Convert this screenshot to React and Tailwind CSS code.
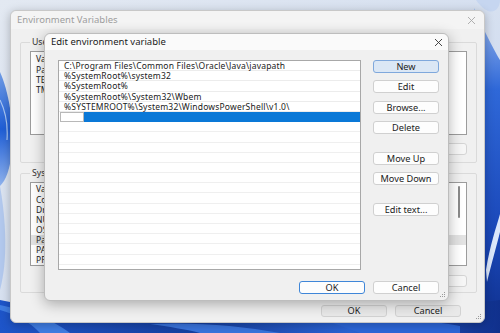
import React from 'react';

const font = { fontFamily: '"Noto Sans", "Open Sans", sans-serif' };

const Wallpaper = () => (
  <svg className="absolute inset-0" width="500" height="333" viewBox="0 0 500 333">
    <defs>
      <linearGradient id="sky" x1="0" y1="0" x2="1" y2="1">
        <stop offset="0" stopColor="#e3e9f2" />
        <stop offset="1" stopColor="#c9d7ee" />
      </linearGradient>
      <linearGradient id="ribbonL" x1="0" y1="0" x2="0" y2="1">
        <stop offset="0" stopColor="#6f9ce6" />
        <stop offset="0.5" stopColor="#1f5ed6" />
        <stop offset="1" stopColor="#8fb3ee" />
      </linearGradient>
      <linearGradient id="ribbonR" x1="0" y1="0" x2="0" y2="1">
        <stop offset="0" stopColor="#9dbbee" />
        <stop offset="0.25" stopColor="#2f68d8" />
        <stop offset="0.7" stopColor="#1a47b8" />
        <stop offset="1" stopColor="#0f2f8a" />
      </linearGradient>
      <linearGradient id="ribbonB" x1="0" y1="0" x2="1" y2="0">
        <stop offset="0" stopColor="#1e55c9" />
        <stop offset="0.4" stopColor="#163f9f" />
        <stop offset="0.7" stopColor="#2a63d4" />
        <stop offset="1" stopColor="#10308c" />
      </linearGradient>
    </defs>
    <rect width="500" height="333" fill="url(#sky)" />
    <path d="M0 72 C8 90 14 120 12 150 C10 170 6 180 0 186 Z" fill="url(#ribbonL)" />
    <path d="M0 100 C5 110 8 125 7 140" stroke="#a9c6f2" strokeWidth="1.2" fill="none" />
    <path d="M0 186 C6 220 8 260 0 290 Z" fill="#b3c9ee" />
    <path d="M476 0 C490 20 500 10 500 0 Z" fill="#c6d6f0" />
    <path d="M474 8 C488 40 500 60 500 60 L500 333 L470 333 Z" fill="url(#ribbonR)" />
    <path d="M486 270 C490 245 496 228 500 214 L500 232 C496 248 492 262 487 282 Z" fill="#dbe7fb" />
    <path d="M0 300 C60 312 140 318 250 316 C340 314 420 310 500 300 L500 333 L0 333 Z" fill="url(#ribbonB)" />
    <path d="M0 305 C30 312 50 318 70 333 L40 333 C30 322 15 314 0 310 Z" fill="#3f7de3" />
    <path d="M150 324 C200 322 240 326 280 333 L200 333 C185 329 170 327 150 324 Z" fill="#3a74dd" />
    <path d="M330 322 C380 320 420 318 460 326 L460 333 L360 333 Z" fill="#2c66d8" />
  </svg>
);

const Btn = ({ children, className = '' }) => (
  <div
    className={`flex items-center justify-center rounded-[3px] border text-[9.2px] leading-[10px] text-[#1b1b1b] ${className}`}
  >
    {children}
  </div>
);

const CloseX = ({ color }) => (
  <svg width="9" height="9" viewBox="0 0 9 9">
    <path d="M1 1 L8 8 M8 1 L1 8" stroke={color} strokeWidth="0.9" />
  </svg>
);

const Grip = () => (
  <svg width="7" height="7" viewBox="0 0 7 7" className="absolute bottom-[2px] right-[2px]">
    <g fill="#9a9a9a">
      <rect x="5" y="1" width="1" height="1" />
      <rect x="3" y="3" width="1" height="1" />
      <rect x="5" y="3" width="1" height="1" />
      <rect x="1" y="5" width="1" height="1" />
      <rect x="3" y="5" width="1" height="1" />
      <rect x="5" y="5" width="1" height="1" />
    </g>
  </svg>
);

// only the left edge of these lists peeks out from under the front dialog
const OuterList = ({ rows, height, header, highlight, scroll }) => (
  <div className={`relative mt-[3px] w-[437px] ${height} overflow-hidden border border-[#9c9c9c] bg-white`}>
    <div className={`flex ${header} items-center pl-[5px] text-[8.5px] leading-[10px] text-[#222]`}>Variable</div>
    {rows.map((r) => (
      <div
        key={r}
        className={`flex h-[10px] items-center pl-[5px] text-[8.5px] leading-[10px] text-[#222] ${r === highlight ? 'bg-[#e3e3e3]' : ''}`}
      >
        {r}
      </div>
    ))}
    {scroll && <div className="absolute right-[6px] top-[3px] h-[32px] w-[2px] rounded bg-[#8a8a8a]" />}
  </div>
);

const OuterButtons = ({ mt }) => (
  <div className={`${mt} flex justify-end`}>
    <Btn className="h-[12px] w-[66px] border-[#d4d4d4] bg-[#f6f6f6]">Delete</Btn>
  </div>
);

const paths = [
  'C:\\Program Files\\Common Files\\Oracle\\Java\\javapath',
  '%SystemRoot%\\system32',
  '%SystemRoot%',
  '%SystemRoot%\\System32\\Wbem',
  '%SYSTEMROOT%\\System32\\WindowsPowerShell\\v1.0\\',
];

export default function App() {
  const empty = Array.from({ length: 16 }, (_, i) => i);
  return (
    <div className="relative h-[333px] w-[500px] overflow-hidden" style={font}>
      <Wallpaper />

      {/* Environment Variables (behind) */}
      <div className="absolute left-[10px] top-[10px] flex h-[313px] w-[475px] flex-col rounded-[6px] border border-[#c8c8c8] bg-[#f0f0f0] shadow-[0_2px_10px_rgba(0,0,0,0.25)]">
        <div className="flex h-[18px] items-center justify-between rounded-t-[6px] bg-[#f4f4f4] pl-[6px] pr-[8px]">
          <span className="text-[9.5px] leading-[12px] text-[#9d9d9d]">Environment Variables</span>
          <CloseX color="#a8a8a8" />
        </div>
        <fieldset className="mx-[9px] mt-[7px] h-[127px] rounded-[2px] border border-[#dadada] px-[9px]">
          <legend className="px-[2px] text-[8.7px] leading-[12px] text-[#333]">User variables</legend>
          <OuterList rows={['Path', 'TEMP', 'TMP']} height="h-[84px]" header="h-[13px]" />
          <OuterButtons mt="mt-[8px]" />
        </fieldset>
        <fieldset className="mx-[9px] mt-[4px] h-[126px] rounded-[2px] border border-[#dadada] px-[9px]">
          <legend className="px-[2px] text-[8.7px] leading-[12px] text-[#333]">System variables</legend>
          <OuterList
            rows={['ComSpec', 'DriverData', 'NUMBER_OF_PROCESSORS', 'OS', 'Path', 'PATHEXT', 'PROCESSOR_ARCHITECTURE']}
            height="h-[84px]"
            header="h-[12px]"
            highlight="Path"
            scroll
          />
          <OuterButtons mt="mt-[9px]" />
        </fieldset>
        <div className="mt-[12px] flex justify-end gap-[8px] pr-[23px]">
          <Btn className="h-[12px] w-[66px] border-[#d2d2d2] bg-[#e9e9e9]">OK</Btn>
          <Btn className="h-[12px] w-[66px] border-[#d2d2d2] bg-[#e9e9e9]">Cancel</Btn>
        </div>
        <Grip />
      </div>

      {/* Edit environment variable (front) */}
      <div className="absolute left-[44px] top-[33px] flex h-[268px] w-[405px] flex-col rounded-[6px] border border-[#bdbdbd] bg-[#f0f0f0] shadow-[0_3px_14px_rgba(0,0,0,0.3)]">
        <div className="flex h-[16px] items-center justify-between rounded-t-[6px] bg-[#fafafa] pl-[6px] pr-[5px]">
          <span className="text-[9.5px] leading-[12px] text-[#1a1a1a]">Edit environment variable</span>
          <CloseX color="#333" />
        </div>
        <div className="flex pl-[13px] pt-[10px]">
          <div className="flex h-[210px] w-[303px] flex-col overflow-hidden border border-[#a8a8a8] bg-white">
            {paths.map((p) => (
              <div
                key={p}
                className="flex h-[10.2px] shrink-0 items-center border-b border-[#ececec] pl-[5px] text-[8.5px] leading-[9px] tracking-[0.2px] text-[#1a1a1a]"
              >
                {p}
              </div>
            ))}
            <div className="flex h-[10.2px] shrink-0 pl-[1px]">
              <div className="h-full w-[24px] border border-[#b8b8b8] bg-white" />
              <div className="h-full flex-1 bg-[#0a78d7]" />
            </div>
            {empty.map((i) => (
              <div key={i} className="h-[10.2px] shrink-0 border-b border-[#efefef]" />
            ))}
          </div>
          <div className="ml-[12px] flex flex-col">
            <Btn className="h-[13px] w-[66px] border-[#7fa8dc] bg-[#dbe7f5]">New</Btn>
            <Btn className="mt-[7px] h-[13px] w-[66px] border-[#d0d0d0] bg-[#fdfdfd]">Edit</Btn>
            <Btn className="mt-[8px] h-[13px] w-[66px] border-[#d0d0d0] bg-[#fdfdfd]">Browse...</Btn>
            <Btn className="mt-[7px] h-[13px] w-[66px] border-[#d0d0d0] bg-[#fdfdfd]">Delete</Btn>
            <Btn className="mt-[18px] h-[13px] w-[66px] border-[#d0d0d0] bg-[#fdfdfd]">Move Up</Btn>
            <Btn className="mt-[7px] h-[13px] w-[66px] border-[#d0d0d0] bg-[#fdfdfd]">Move Down</Btn>
            <Btn className="mt-[18px] h-[13px] w-[66px] border-[#d0d0d0] bg-[#fdfdfd]">Edit text...</Btn>
          </div>
        </div>
        <div className="mt-[11px] flex justify-end gap-[8px] pr-[9px]">
          <Btn className="h-[13px] w-[66px] border-[#3f86d8] bg-[#fdfdfd]">OK</Btn>
          <Btn className="h-[13px] w-[66px] border-[#d0d0d0] bg-[#fdfdfd]">Cancel</Btn>
        </div>
        <Grip />
      </div>
    </div>
  );
}
